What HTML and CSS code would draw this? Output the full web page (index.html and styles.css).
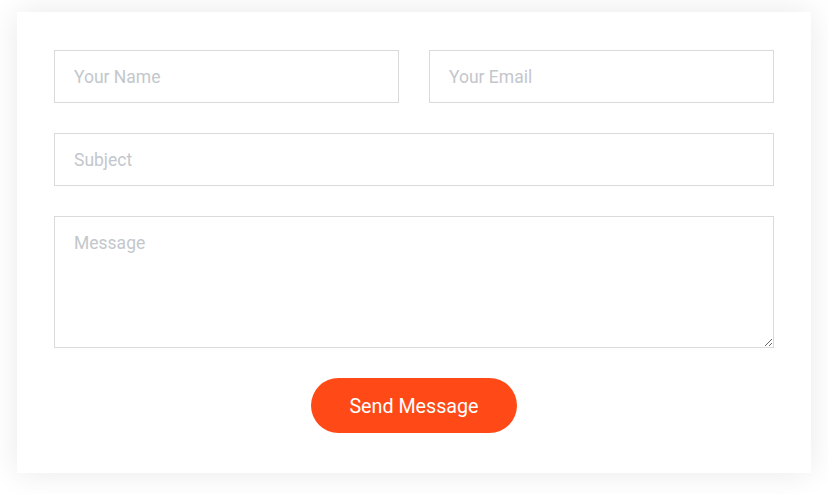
FILE: index.html
```html
<!DOCTYPE html>
<html lang="en">
<head>
<meta charset="utf-8">
<title>Contact Form</title>
<link rel="stylesheet" href="styles.css">
</head>
<body>
<form class="card" onsubmit="return false;">
  <div class="row two">
    <input class="field" type="text" placeholder="Your Name">
    <input class="field" type="email" placeholder="Your Email">
  </div>
  <div class="row">
    <input class="field" type="text" placeholder="Subject">
  </div>
  <div class="row">
    <textarea class="field area" placeholder="Message"></textarea>
  </div>
  <div class="actions">
    <button class="send" type="submit">Send Message</button>
  </div>
</form>
</body>
</html>
```
FILE: styles.css
```css
* { box-sizing: border-box; }
html, body { margin: 0; padding: 0; background: #ffffff; }
body { font-family: Roboto, "Liberation Sans", Arial, sans-serif; padding: 12px 17px 21px; }
.card {
  background: #fff;
  box-shadow: 0 0 30px rgba(0, 0, 0, 0.09);
  padding: 38px 37px 40px;
  display: flex;
  flex-direction: column;
  gap: 30px;
}
.row { display: flex; }
.row.two { gap: 30px; }
.field {
  flex: 1;
  min-width: 0;
  height: 53px;
  border: 1px solid #d9dadb;
  border-radius: 0;
  padding: 0 19px;
  font-family: Roboto, "Liberation Sans", Arial, sans-serif;
  font-size: 17.5px;
  color: #444;
  background: #fff;
  outline: none;
}
.field::placeholder { color: #c3c7cc; opacity: 1; }
.area {
  height: 132px;
  padding: 14px 19px;
  line-height: 24px;
  resize: vertical;
  display: block;
}
.actions { display: flex; justify-content: center; }
.send {
  width: 206px;
  height: 55px;
  border: none;
  border-radius: 28px;
  background: #ff4a17;
  color: #fff;
  padding: 2px 0 0;
  font-family: Roboto, "Liberation Sans", Arial, sans-serif;
  font-size: 19.7px;
  cursor: pointer;
}
```
